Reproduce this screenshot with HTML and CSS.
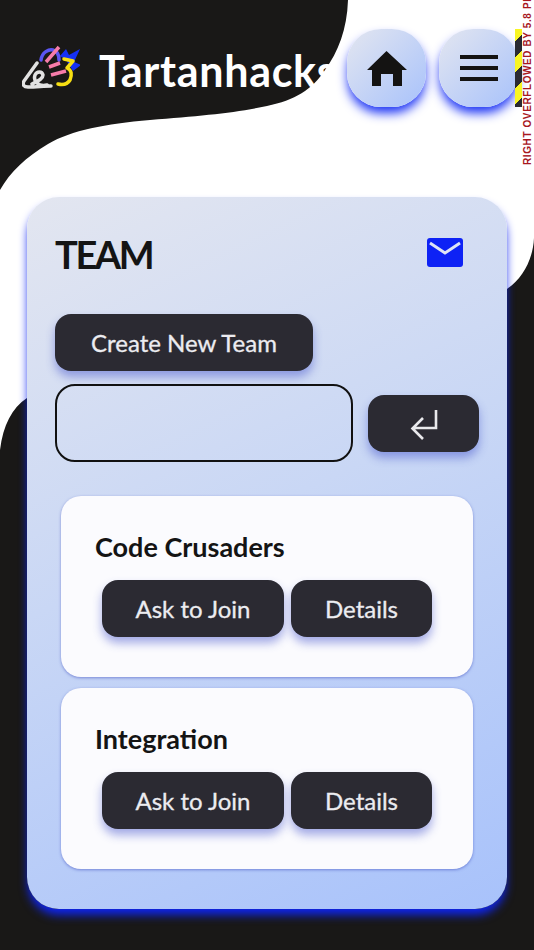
FILE: index.html
```html
<!DOCTYPE html>
<html lang="en">
<head>
<meta charset="utf-8">
<title>Tartanhacks Team</title>
<link rel="stylesheet" href="styles.css">
</head>
<body>
<svg class="backdrop" viewBox="0 0 534 950" aria-hidden="true">
  <path class="blob" d="M0 0H348C347 30 338 52 325 70C312 90 295 100 267 106C235 113 200 116 150 120C105 124 72 130 48 144C26 157 10 172 0 190Z"/>
  <path class="blob" d="M0 450C3 425 12 408 27 398L507 289C522 279 533 260 534 238V950H0Z"/>
</svg>
<div class="debug-stripe"></div>
<div class="debug-text">RIGHT OVERFLOWED BY 5.8 PIXELS</div>
<div class="page">
  <header class="topbar">
    <svg class="logo" viewBox="22 44 58 46" aria-hidden="true">
      <path class="logo-star" d="M60 56L66 49L69 55L80 49L74 62L81 65L73 71L66 60Z"/>
      <path class="logo-arc" d="M41 60C42 52 49 49 53 50C57 51 59 55 59 60"/>
      <path class="logo-pen" d="M37 63L24 81C22 85 24 87 28 87C36 87 44 86 51 86M32 84C38 81 43 79 43 75C42 71 37 71 35 75C33 81 38 87 47 85"/>
      <path class="logo-pink" d="M46 62L59 47M49 67L60 63M51 75L66 71"/>
      <path class="logo-three" d="M64 59L73 61L67 68C72 70 72 75 70 80C67 85 62 85 58 84"/>
    </svg>
    <h1 class="brand">Tartanhacks</h1>
    <div class="nav-buttons">
      <button class="round-btn" aria-label="Home">
        <svg class="home-icon" viewBox="0 0 40 35"><path fill-rule="evenodd" d="M19.5 0L40 19H35V35H26V23H14V35H5V19H0Z"/></svg>
      </button>
      <button class="round-btn" aria-label="Menu">
        <span class="menu-icon"><i></i><i></i><i></i></span>
      </button>
    </div>
  </header>

  <main class="panel">
    <div class="panel-head">
      <h2 class="panel-title">TEAM</h2>
      <svg class="mail-icon" viewBox="0 0 36 29"><rect width="36" height="29" rx="3"/><path d="M3 5L18 15L33 5"/></svg>
    </div>
    <button class="dark-btn create-btn">Create New Team</button>
    <div class="input-row">
      <input class="team-input" type="text" aria-label="Team name">
      <button class="dark-btn enter-btn" aria-label="Submit">
        <svg class="enter-icon" viewBox="0 0 28 31"><path d="M26 1V19H3M13 9L2.5 19.500L13 30"/></svg>
      </button>
    </div>
    <section class="team-list">
      <article class="team-card">
        <h3 class="team-name">Code Crusaders</h3>
        <div class="team-actions">
          <button class="dark-btn join-btn">Ask to Join</button>
          <button class="dark-btn details-btn">Details</button>
        </div>
      </article>
      <article class="team-card">
        <h3 class="team-name">Integration</h3>
        <div class="team-actions">
          <button class="dark-btn join-btn">Ask to Join</button>
          <button class="dark-btn details-btn">Details</button>
        </div>
      </article>
    </section>
  </main>
</div>
</body>
</html>
```
FILE: styles.css
```css
* { box-sizing: border-box; }
html, body { margin: 0; padding: 0; }
body {
  width: 534px;
  height: 950px;
  overflow: hidden;
  position: relative;
  background: #fff;
  font-family: "Lato", "Open Sans", sans-serif;
  color: #141414;
}
.backdrop { position: absolute; left: 0; top: 0; width: 534px; height: 950px; }
.blob { fill: #191817; }
.page { position: relative; width: 534px; }

.topbar {
  display: flex;
  align-items: flex-start;
  height: 197px;
  padding: 29px 0 0 22px;
  white-space: nowrap;
  overflow: hidden;
}
.logo { width: 58px; height: 46px; margin-top: 15px; flex: none; fill: none; stroke-linecap: round; stroke-linejoin: round; }
.logo-star { fill: #1530f5; stroke: none; }
.logo-arc { stroke: #5b55f2; stroke-width: 3.500; }
.logo-pen { stroke: #e2e2e2; stroke-width: 3.500; }
.logo-pink { stroke: #f67ca9; stroke-width: 3.500; stroke-linecap: butt; }
.logo-three { stroke: #f6de12; stroke-width: 3.500; }
.brand {
  margin: 12px 0 0 19px;
  width: 248px;
  flex: none;
  font-size: 43px;
  line-height: 60px;
  font-weight: 700;
  color: #fff;
  letter-spacing: 0.7px;
}
.nav-buttons { display: flex; gap: 13px; flex: none; padding-bottom: 30px; }
.round-btn {
  width: 79px;
  height: 78px;
  padding: 0;
  border: 0;
  border-radius: 34px;
  background: linear-gradient(135deg, #e3e6f0, #a8c2fb);
  box-shadow: 0 7px 11px -1px #1a32f5;
  display: flex;
  align-items: center;
  justify-content: center;
}
.home-icon { width: 40px; height: 35px; fill: #141312; }
.menu-icon { display: flex; flex-direction: column; gap: 7px; }
.menu-icon i { display: block; width: 38px; height: 4px; background: #141312; }

.panel {
  margin-left: 27px;
  width: 480px;
  height: 712px;
  padding: 0 28px;
  border-radius: 32px;
  background: linear-gradient(155deg, #e3e6f0 0%, #c9d7f5 45%, #a8c2fb 100%);
  box-shadow: 0 7px 10px -1px #0f25f0;
}
.panel-head {
  display: flex;
  justify-content: space-between;
  align-items: flex-start;
  height: 117px;
  padding: 41px 16px 0 0;
}
.panel-title {
  margin: 0;
  font-size: 38px;
  line-height: 32px;
  font-weight: 700;
  letter-spacing: -2.4px;
}
.mail-icon { width: 36px; height: 29px; flex: none; }
.mail-icon rect { fill: #0e22f5; }
.mail-icon path { fill: none; stroke: #dfe4f5; stroke-width: 3; }

.dark-btn {
  height: 57px;
  padding: 0;
  border: 0;
  border-radius: 16px;
  background: #2b2a32;
  color: #ececf0;
  font-family: "Lato", sans-serif;
  font-size: 24px;
  font-weight: 400;
  -webkit-text-stroke: 0.3px #ececf0;
  box-shadow: 0 6px 10px rgba(55, 70, 200, .45);
  display: flex;
  align-items: center;
  justify-content: center;
}
.create-btn { width: 258px; }
.input-row { display: flex; align-items: center; gap: 15px; margin-top: 13px; }
.team-input {
  width: 298px;
  height: 78px;
  border: 2.500px solid #111;
  border-radius: 20px;
  background: transparent;
}
.enter-btn { width: 111px; }
.enter-icon { width: 28px; height: 31px; fill: none; stroke: #e9e9ec; stroke-width: 2.600; margin-top: 2px; }

.team-list { display: flex; flex-direction: column; gap: 11px; margin: 34px 0 0 6px; width: 412px; }
.team-card {
  height: 181px;
  padding: 33px 41px 0 34px;
  border-radius: 20px;
  background: #fbfbfe;
  box-shadow: 0 1px 3px rgba(60, 75, 190, .55);
}
.team-name { margin: 0; font-size: 27px; line-height: 36px; font-weight: 700; color: #141414; }
.team-actions { display: flex; gap: 7px; margin: 15px 0 0 7px; }
.join-btn { width: 182px; }
.details-btn { width: 141px; }

.debug-stripe {
  position: absolute;
  left: 515px;
  top: 29px;
  width: 7px;
  height: 78px;
  z-index: 2;
  background: repeating-linear-gradient(-45deg, #2a2a32 0 7px, #f8f524 7px 18px, #2a2a32 18px 22px);
}
.debug-text {
  position: absolute;
  left: 523px;
  bottom: 785px;
  z-index: 2;
  height: 200px;
  writing-mode: vertical-rl;
  transform: rotate(180deg);
  text-align: left;
  font-family: "Liberation Sans", sans-serif;
  font-size: 10px;
  line-height: 10px;
  font-weight: 700;
  letter-spacing: 0.600px;
  color: #a8181f;
  white-space: nowrap;
}
```
